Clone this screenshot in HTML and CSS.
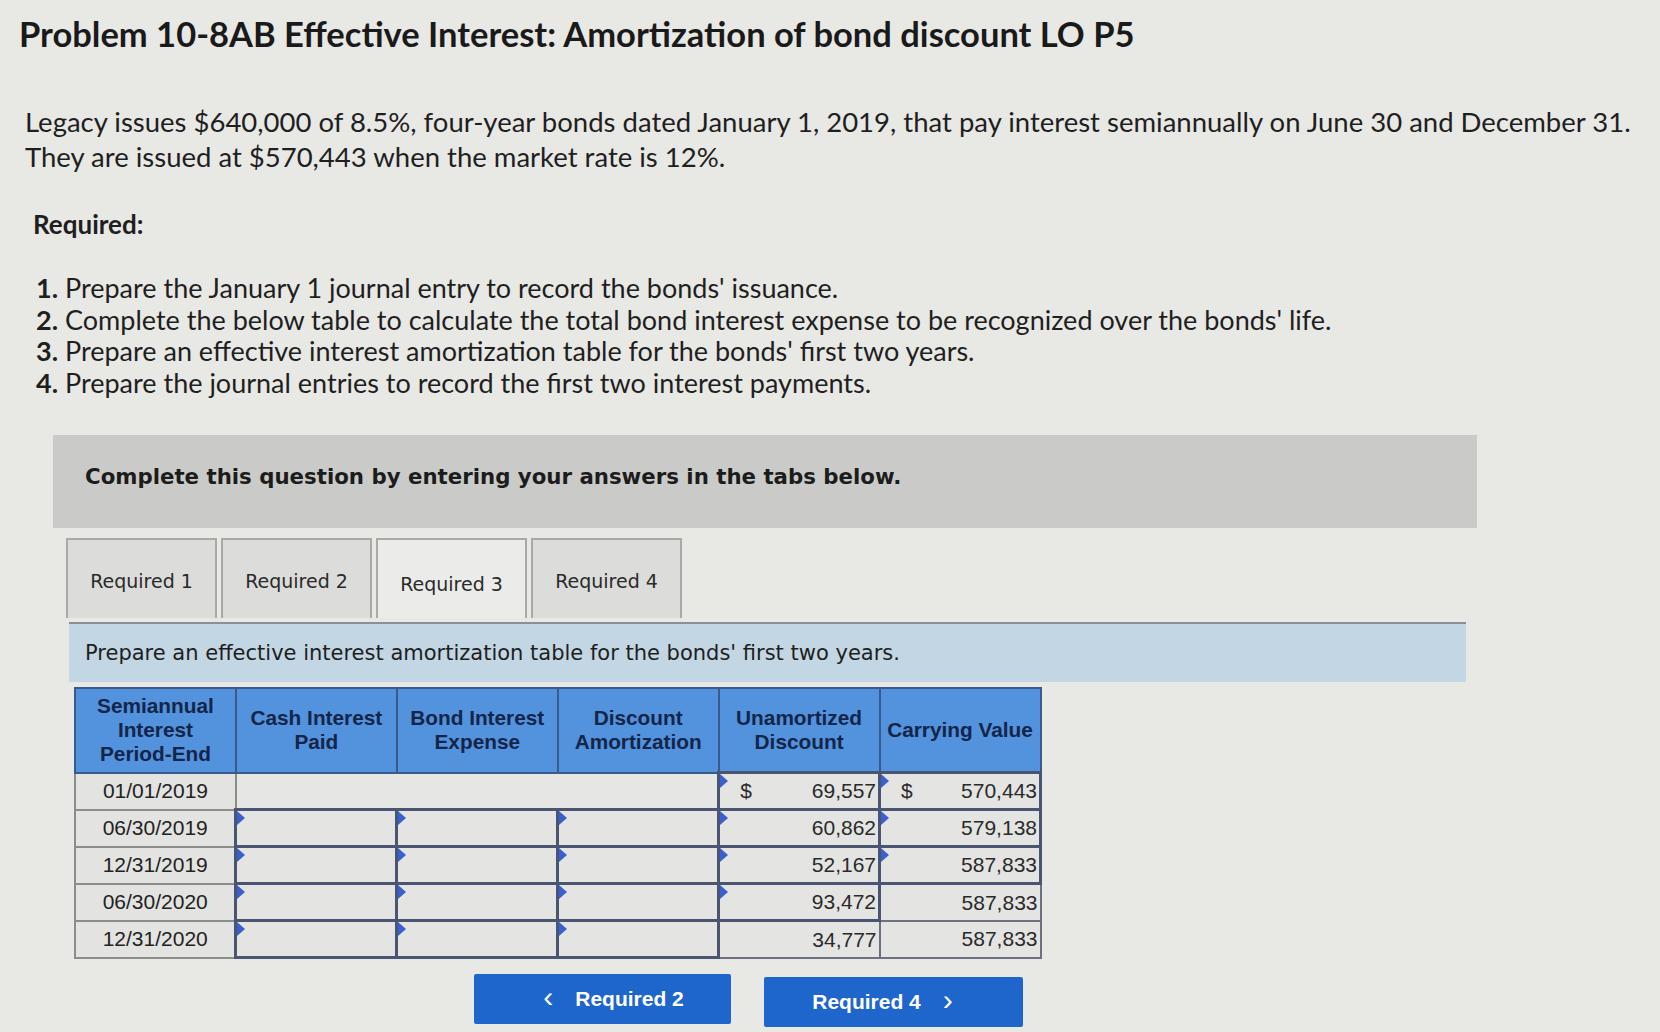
FILE: index.html
```html
<!DOCTYPE html>
<html>
<head>
<meta charset="utf-8">
<link rel="stylesheet" href="styles.css">
</head>
<body>
<div class="page">
  <h1 class="title">Problem 10-8AB Effective Interest: Amortization of bond discount LO P5</h1>
  <p class="intro">Legacy issues $640,000 of 8.5%, four-year bonds dated January 1, 2019, that pay interest semiannually on June 30 and December 31.<br>They are issued at $570,443 when the market rate is 12%.</p>
  <div class="req-label">Required:</div>
  <ol class="req-list">
    <li><b>1.</b> Prepare the January 1 journal entry to record the bonds' issuance.</li>
    <li><b>2.</b> Complete the below table to calculate the total bond interest expense to be recognized over the bonds' life.</li>
    <li><b>3.</b> Prepare an effective interest amortization table for the bonds' first two years.</li>
    <li><b>4.</b> Prepare the journal entries to record the first two interest payments.</li>
  </ol>
  <div class="complete-box">Complete this question by entering your answers in the tabs below.</div>
  <div class="tabs">
    <div class="tab">Required 1</div>
    <div class="tab">Required 2</div>
    <div class="tab active">Required 3</div>
    <div class="tab">Required 4</div>
  </div>
  <div class="instruction">Prepare an effective interest amortization table for the bonds' first two years.</div>
  <table class="amort">
    <thead>
      <tr>
        <th>Semiannual<br>Interest<br>Period-End</th>
        <th>Cash Interest<br>Paid</th>
        <th>Bond Interest<br>Expense</th>
        <th>Discount<br>Amortization</th>
        <th>Unamortized<br>Discount</th>
        <th>Carrying Value</th>
      </tr>
    </thead>
    <tbody>
      <tr>
        <td class="date">01/01/2019</td>
        <td class="blank" colspan="3"></td>
        <td class="inp"><span class="tri"></span><span class="cur">$</span><span class="val">69,557</span></td>
        <td class="inp"><span class="tri"></span><span class="cur">$</span><span class="val">570,443</span></td>
      </tr>
      <tr>
        <td class="date">06/30/2019</td>
        <td class="inp"><span class="tri"></span></td>
        <td class="inp"><span class="tri"></span></td>
        <td class="inp"><span class="tri"></span></td>
        <td class="inp"><span class="tri"></span><span class="val">60,862</span></td>
        <td class="inp"><span class="tri"></span><span class="val">579,138</span></td>
      </tr>
      <tr>
        <td class="date">12/31/2019</td>
        <td class="inp"><span class="tri"></span></td>
        <td class="inp"><span class="tri"></span></td>
        <td class="inp"><span class="tri"></span></td>
        <td class="inp"><span class="tri"></span><span class="val">52,167</span></td>
        <td class="inp"><span class="tri"></span><span class="val">587,833</span></td>
      </tr>
      <tr>
        <td class="date">06/30/2020</td>
        <td class="inp"><span class="tri"></span></td>
        <td class="inp"><span class="tri"></span></td>
        <td class="inp"><span class="tri"></span></td>
        <td class="inp"><span class="tri"></span><span class="val">93,472</span></td>
        <td class="inp plain"><span class="val">587,833</span></td>
      </tr>
      <tr>
        <td class="date">12/31/2020</td>
        <td class="inp"><span class="tri"></span></td>
        <td class="inp"><span class="tri"></span></td>
        <td class="inp"><span class="tri"></span></td>
        <td class="inp plain"><span class="val">34,777</span></td>
        <td class="inp plain"><span class="val">587,833</span></td>
      </tr>
    </tbody>
  </table>
  <div class="nav">
    <div class="btn prev"><span class="chev">&lsaquo;</span> Required 2</div>
    <div class="btn next">Required 4 <span class="chev">&rsaquo;</span></div>
  </div>
</div>
</body>
</html>
```
FILE: styles.css
```css
html, body {
  margin: 0;
  padding: 0;
  background: #e8e8e5;
}
.page {
  width: 1660px;
  height: 1032px;
  overflow: hidden;
  box-sizing: border-box;
  padding: 12px 0 0 19px;
  font-family: Lato, "Open Sans", sans-serif;
  color: #1f1f1f;
}
.title {
  margin: 0;
  font-size: 34.5px;
  line-height: 44px;
  font-weight: 700;
  color: #1a1a1a;
}
.intro {
  margin: 48px 0 0 6px;
  font-size: 27.5px;
  line-height: 35px;
}
.req-label {
  margin: 34px 0 0 14px;
  font-size: 26px;
  font-weight: 700;
  line-height: 32px;
}
.req-list {
  list-style: none;
  margin: 32px 0 0 17px;
  padding: 0;
  font-size: 27px;
  line-height: 31.7px;
}
.req-list b { font-weight: 700; }
.complete-box {
  margin: 36px 0 0 34px;
  width: 1424px;
  height: 93px;
  box-sizing: border-box;
  background: #cacbc8;
  padding: 29px 0 0 32px;
  font-family: "DejaVu Sans", Verdana, sans-serif;
  font-weight: 700;
  font-size: 21.3px;
  color: #1c1c1c;
}
.tabs {
  display: flex;
  gap: 4px;
  margin: 10px 0 0 47px;
  height: 80px;
  align-items: stretch;
}
.tab {
  width: 151px;
  box-sizing: border-box;
  border: 2px solid #a9a9a7;
  border-bottom: none;
  background: #dcdcda;
  display: flex;
  align-items: center;
  justify-content: center;
  font-family: "DejaVu Sans", Verdana, sans-serif;
  font-size: 19px;
  color: #2a2a2a;
  padding-top: 4px;
}
.tab.active {
  background: #ebebe9;
  padding-top: 10px;
}
.instruction {
  margin: 4px 0 0 50px;
  width: 1397px;
  height: 60px;
  box-sizing: border-box;
  background: #c3d6e3;
  border-top: 2px solid #8a9095;
  padding: 17px 0 0 16px;
  font-family: "DejaVu Sans", Verdana, sans-serif;
  font-size: 21px;
  color: #1e1e1e;
}
.amort {
  margin: 5px 0 0 55px;
  border-collapse: collapse;
  font-family: "Liberation Sans", Arial, sans-serif;
  font-size: 21px;
  table-layout: fixed;
  width: 968px;
}
.amort th {
  height: 85px;
  background: #5392dc;
  color: #14254a;
  font-weight: 700;
  font-size: 20.8px;
  line-height: 24px;
  border: 2px solid #3a5a8c;
  text-align: center;
  padding: 0;
  box-sizing: border-box;
}
.amort td {
  height: 37px;
  padding: 0;
  box-sizing: border-box;
}
.amort td.date {
  background: #e3e3e1;
  border: 2px solid #8c8c8a;
  text-align: center;
  color: #222;
}
.amort td.blank {
  background: #e6e6e4;
  border: 2px solid #8c8c8a;
  border-left: none;
}
.amort td.inp {
  position: relative;
  background: #e4e4e2;
  border: 3px solid #4a5572;
  text-align: right;
  padding-right: 2px;
  color: #2a2a2a;
}
.amort td.inp.plain { border-color: #6c7080; border-width: 2px; }
.tri {
  position: absolute;
  left: 0;
  top: 0;
  width: 0;
  height: 0;
  border-top: 7px solid transparent;
  border-bottom: 7px solid transparent;
  border-left: 8px solid #3a5fcf;
}
.cur {
  position: absolute;
  left: 20px;
  top: 50%;
  transform: translateY(-50%);
}
.nav {
  display: flex;
  gap: 33px;
  margin: 15px 0 0 455px;
}
.btn {
  height: 50px;
  background: #1f66cc;
  color: #fff;
  font-family: "Liberation Sans", Arial, sans-serif;
  font-weight: 700;
  font-size: 21px;
  display: flex;
  align-items: center;
  justify-content: center;
  border-radius: 2px;
}
.btn.prev { width: 257px; }
.btn.next { width: 259px; margin-top: 3px; }
.chev {
  font-size: 30px;
  font-weight: 400;
  margin: 0 22px;
  position: relative;
  top: -2px;
}
```
